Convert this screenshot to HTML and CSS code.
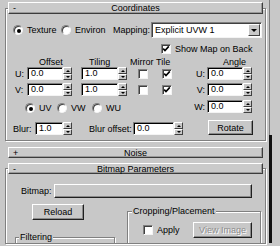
FILE: index.html
```html
<!DOCTYPE html>
<html>
<head>
<meta charset="utf-8">
<link rel="stylesheet" href="styles.css">
</head>
<body>
<div class="screen">
  <div class="main">
    <section class="rollout coords">
      <div class="rhead"><span class="sign">-</span><span class="title">Coordinates</span><span></span></div>
      <div class="row r-map">
        <label class="opt w-tex"><span class="radio on"></span>Texture</label>
        <label class="opt w-env"><span class="radio"></span>Environ</label>
        <span class="w-mapping">Mapping:</span>
        <div class="combo"><span class="combo-val">Explicit UVW 1</span><span class="combo-btn"><i class="tri-dn"></i></span></div>
      </div>
      <div class="row r-show">
        <label class="opt"><span class="chk"><svg viewBox="0 0 8 8" width="8" height="8"><polyline points="1.2,3.6 3,5.6 6.8,1.4" fill="none" stroke="#000" stroke-width="1.6"/></svg></span>Show Map on Back</label>
      </div>
      <div class="cols">
        <div class="col-left">
          <div class="row labels"><span class="h-offset">Offset</span><span class="h-tiling">Tiling</span><span class="h-mirror">Mirror</span><span>Tile</span></div>
          <div class="row r-axis">
            <span class="axis">U:</span>
            <span class="fld w36">0.0</span><span class="arrows"><i class="ab"><i class="tri-up"></i></i><i class="ab"><i class="tri-dn2"></i></i></span>
            <span class="fld w37 ml9">1.0</span><span class="arrows"><i class="ab"><i class="tri-up"></i></i><i class="ab"><i class="tri-dn2"></i></i></span>
            <span class="chk ml11"></span>
            <span class="chk ml10"><svg viewBox="0 0 8 8" width="8" height="8"><polyline points="1.2,3.6 3,5.6 6.8,1.4" fill="none" stroke="#000" stroke-width="1.6"/></svg></span>
          </div>
          <div class="row r-axis mt3">
            <span class="axis">V:</span>
            <span class="fld w36">0.0</span><span class="arrows"><i class="ab"><i class="tri-up"></i></i><i class="ab"><i class="tri-dn2"></i></i></span>
            <span class="fld w37 ml9">1.0</span><span class="arrows"><i class="ab"><i class="tri-up"></i></i><i class="ab"><i class="tri-dn2"></i></i></span>
            <span class="chk ml11"></span>
            <span class="chk ml10"><svg viewBox="0 0 8 8" width="8" height="8"><polyline points="1.2,3.6 3,5.6 6.8,1.4" fill="none" stroke="#000" stroke-width="1.6"/></svg></span>
          </div>
          <div class="row r-radios">
            <label class="opt w-uv"><span class="radio on"></span>UV</label>
            <label class="opt w-vw"><span class="radio"></span>VW</label>
            <label class="opt"><span class="radio"></span>WU</label>
          </div>
          <div class="row r-blur">
            <span class="w-blur">Blur:</span>
            <span class="fld w28">1.0</span><span class="arrows"><i class="ab"><i class="tri-up"></i></i><i class="ab"><i class="tri-dn2"></i></i></span>
            <span class="w-bluroff">Blur offset:</span>
            <span class="fld w41">0.0</span><span class="arrows"><i class="ab"><i class="tri-up"></i></i><i class="ab"><i class="tri-dn2"></i></i></span>
          </div>
        </div>
        <div class="col-right">
          <div class="row labels"><span class="h-angle">Angle</span></div>
          <div class="row r-axis">
            <span class="axis-r">U:</span>
            <span class="fld w36">0.0</span><span class="arrows"><i class="ab"><i class="tri-up"></i></i><i class="ab"><i class="tri-dn2"></i></i></span>
          </div>
          <div class="row r-axis mt3">
            <span class="axis-r">V:</span>
            <span class="fld w36">0.0</span><span class="arrows"><i class="ab"><i class="tri-up"></i></i><i class="ab"><i class="tri-dn2"></i></i></span>
          </div>
          <div class="row r-axis mt4">
            <span class="axis-r">W:</span>
            <span class="fld w36">0.0</span><span class="arrows"><i class="ab"><i class="tri-up"></i></i><i class="ab"><i class="tri-dn2"></i></i></span>
          </div>
          <div class="btn rotate">Rotate</div>
        </div>
      </div>
    </section>

    <div class="rhead noise"><span class="sign">+</span><span class="title">Noise</span><span></span></div>

    <section class="rollout bitmap">
      <div class="rhead"><span class="sign">-</span><span class="title">Bitmap Parameters</span><span></span></div>
      <div class="row r-bitmap">
        <span class="w-bmlabel">Bitmap:</span>
        <div class="btn bm-path"></div>
      </div>
      <div class="lower">
        <div class="low-left">
          <div class="btn reload">Reload</div>
          <fieldset class="group filtering">
            <legend>Filtering</legend>
          </fieldset>
        </div>
        <fieldset class="group cropping">
          <legend>Cropping/Placement</legend>
          <div class="row r-apply">
            <label class="opt w-apply"><span class="chk"></span>Apply</label>
            <div class="btn view disabled">View Image</div>
          </div>
        </fieldset>
      </div>
    </section>
  </div>
  <div class="scroll">
    <div class="track"></div>
    <div class="thumb"></div>
  </div>
</div>
</body>
</html>
```

FILE: styles.css
```css
html, body {
  margin: 0;
  padding: 0;
}
body {
  background: #c8c8c8;
  font-family: "Liberation Sans", Arial, sans-serif;
  font-size: 9px;
  line-height: 10px;
  color: #000;
  width: 280px;
  height: 246px;
  overflow: hidden;
}
.screen {
  display: flex;
  height: 246px;
  overflow: hidden;
}
.main {
  width: 262px;
  padding-left: 5px;
}
.scroll {
  width: 3px;
  margin-left: 2px;
  display: flex;
  flex-direction: column;
}
.track {
  height: 135px;
  border-left: 1px solid #7c7c7c;
  box-sizing: border-box;
}
.thumb {
  height: 108px;
  background: #101010;
}

/* rollouts */
.rollout {
  width: 261px;
  box-sizing: border-box;
  border: 1px solid #808080;
  box-shadow: 1px 1px 0 #fff, inset 1px 1px 0 #fff;
}
.coords {
  margin-top: 8px;
  padding-bottom: 5px;
}
.rhead {
  margin: -7px 2px 0;
  height: 12px;
  box-sizing: border-box;
  border-top: 1px solid #fff;
  border-left: 1px solid #fff;
  border-bottom: 1px solid #3c3c3c;
  border-right: 1px solid #3c3c3c;
  box-shadow: inset -1px -1px 0 #9a9a9a;
  background: #cacaca;
  display: grid;
  grid-template-columns: 1fr auto 1fr;
  align-items: center;
}
.sign {
  padding-left: 4px;
  line-height: 9px;
}
.noise {
  margin: 6px 0 0 3px;
  width: 255px;
  height: 11px;
}
.bitmap {
  margin-top: 10px;
}
.bitmap .rhead {
  margin-top: -6px;
  height: 11px;
}

.row {
  display: flex;
  align-items: center;
}
.opt {
  display: flex;
  align-items: center;
}

/* coordinates rows */
.r-map {
  margin-top: 8px;
  height: 16px;
  padding-left: 7px;
}
.w-tex { width: 48px; }
.w-env { width: 52px; }
.w-mapping { width: 38px; }
.r-show {
  margin-top: 6px;
  height: 10px;
  padding-left: 155px;
}
.cols {
  margin-top: 3px;
  display: flex;
}
.col-left { width: 184px; }
.col-right { flex: 1; }
.labels { height: 9px; }
.h-offset { margin-left: 33px; width: 50px; }
.h-tiling { width: 41px; }
.h-mirror { width: 26px; }
.h-angle { margin-left: 33px; }
.r-axis {
  margin-top: 1px;
  height: 13px;
}
.mt3 { margin-top: 3px; }
.mt4 { margin-top: 4px; }
.axis {
  margin-left: 9px;
  width: 12px;
}
.axis-r {
  width: 17px;
  box-sizing: border-box;
  padding-right: 2px;
  text-align: right;
}
.ml9 { margin-left: 9px; }
.ml10 { margin-left: 10px; }
.ml11 { margin-left: 11px; }
.r-radios {
  margin-top: 7px;
  height: 10px;
  padding-left: 19px;
}
.w-uv { width: 32px; }
.w-vw { width: 35px; }
.r-blur {
  margin-top: 9px;
  height: 13px;
}
.w-blur { margin-left: 7px; width: 22px; }
.w-bluroff { margin-left: 17px; width: 44px; }
.rotate {
  margin: 7px 0 0 18px;
  width: 45px;
  height: 15px;
}

/* controls */
.radio {
  width: 10px;
  height: 10px;
  box-sizing: border-box;
  border-radius: 50%;
  background: #fff;
  border: 1px solid;
  border-color: #808080 #f4f4f4 #f4f4f4 #808080;
  box-shadow: inset 1px 1px 0 #404040;
  margin-right: 4px;
  display: flex;
  align-items: center;
  justify-content: center;
}
.radio.on::after {
  content: "";
  width: 4px;
  height: 4px;
  border-radius: 50%;
  background: #000;
  margin: 1px 0 0 1px;
}
.chk {
  width: 10px;
  height: 10px;
  box-sizing: border-box;
  background: #fff;
  border: 1px solid;
  border-color: #808080 #f4f4f4 #f4f4f4 #808080;
  box-shadow: inset 1px 1px 0 #404040;
  margin-right: 4px;
  display: flex;
  align-items: center;
  justify-content: center;
}
.chk svg { display: block; }
.fld {
  height: 13px;
  box-sizing: border-box;
  background: #fff;
  border: 1px solid;
  border-color: #808080 #f4f4f4 #f4f4f4 #808080;
  box-shadow: inset 1px 1px 0 #000;
  padding-left: 3px;
  line-height: 11px;
}
.w28 { width: 28px; }
.w36 { width: 36px; }
.w37 { width: 37px; }
.w41 { width: 41px; }
.arrows {
  width: 9px;
  height: 13px;
  display: flex;
  flex-direction: column;
}
.ab {
  height: 7px;
  box-sizing: border-box;
  background: #c8c8c8;
  border: 1px solid;
  border-color: #fff #404040 #404040 #fff;
  display: flex;
  align-items: center;
  justify-content: center;
}
.ab + .ab { height: 6px; }
.tri-up {
  width: 0;
  height: 0;
  border-left: 2px solid transparent;
  border-right: 2px solid transparent;
  border-bottom: 2px solid #000;
}
.tri-dn2 {
  width: 0;
  height: 0;
  border-left: 2px solid transparent;
  border-right: 2px solid transparent;
  border-top: 2px solid #000;
}
.combo {
  width: 111px;
  height: 16px;
  box-sizing: border-box;
  display: flex;
  background: #fff;
  border: 1px solid;
  border-color: #808080 #f4f4f4 #f4f4f4 #808080;
  box-shadow: inset 1px 1px 0 #404040;
}
.combo-val {
  flex: 1;
  padding: 1px 0 0 3px;
  line-height: 13px;
}
.combo-btn {
  width: 12px;
  margin: 1px 1px 1px 0;
  box-sizing: border-box;
  background: #c8c8c8;
  border: 1px solid;
  border-color: #fff #404040 #404040 #fff;
  display: flex;
  align-items: center;
  justify-content: center;
}
.tri-dn {
  width: 0;
  height: 0;
  border-left: 3px solid transparent;
  border-right: 3px solid transparent;
  border-top: 3px solid #000;
}
.btn {
  box-sizing: border-box;
  background: #c8c8c8;
  border: 1px solid;
  border-color: #fff #202020 #202020 #fff;
  box-shadow: inset -1px -1px 0 #8a8a8a;
  display: flex;
  align-items: center;
  justify-content: center;
}
.disabled {
  color: #8c8c8c;
  text-shadow: 1px 1px 0 #fff;
}

/* bitmap rollout */
.r-bitmap {
  margin-top: 10px;
  height: 14px;
}
.w-bmlabel { margin-left: 15px; width: 33px; }
.bm-path {
  width: 198px;
  height: 14px;
}
.lower {
  display: flex;
  height: 45px;
  overflow: hidden;
}
.low-left {
  width: 121px;
}
.reload {
  margin: 6px 0 0 26px;
  width: 52px;
  height: 16px;
}
.group {
  margin: 0;
  padding: 0;
  min-width: 0;
  border: 1px solid #808080;
  box-shadow: inset 1px 1px 0 #fff, 1px 1px 0 #fff;
}
.group legend {
  padding: 0 1px;
  line-height: 10px;
  background: #c8c8c8;
}
.filtering {
  margin: 12px 0 0 9px;
  width: 100px;
  height: 40px;
  box-sizing: border-box;
}
.filtering legend { margin-left: 3px; }
.cropping {
  margin-top: 8px;
  width: 134px;
  height: 60px;
  box-sizing: border-box;
}
.cropping legend { margin-left: 4px; }
.r-apply {
  margin-top: 6px;
  padding-left: 15px;
  height: 16px;
}
.w-apply { width: 50px; }
.view {
  width: 59px;
  height: 16px;
}
```
